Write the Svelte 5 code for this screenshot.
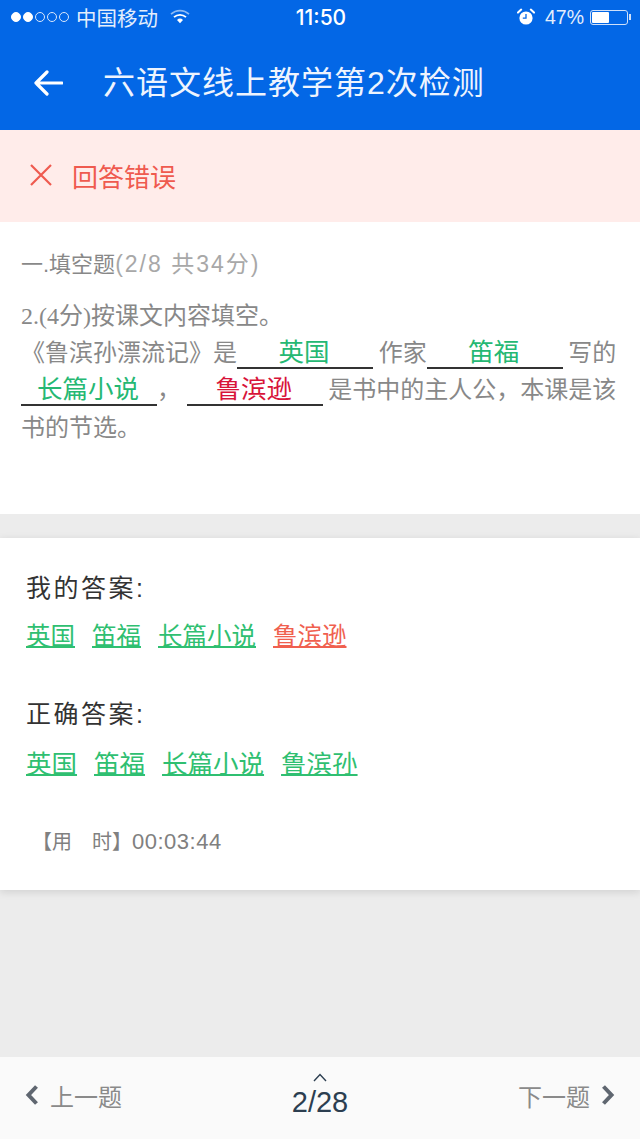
<script>
  const mine = [
    { text: '英国', ok: true },
    { text: '笛福', ok: true },
    { text: '长篇小说', ok: true },
    { text: '鲁滨逊', ok: false },
  ];
  const right = ['英国', '笛福', '长篇小说', '鲁滨孙'];
</script>

<div class="page">
  <header class="top">
    <div class="status">
      <div class="status-left">
        <span class="signal">
          <i class="on"></i><i class="on"></i><i></i><i></i><i></i>
        </span>
        <span class="carrier">中国移动</span>
        <svg class="wifi" width="20" height="16" viewBox="0 0 20 16">
          <path d="M1 5.2a13 13 0 0 1 18 0" fill="none" stroke="#fff" stroke-opacity=".55" stroke-width="1.6" />
          <path d="M4 8.2a8.8 8.8 0 0 1 12 0" fill="none" stroke="#fff" stroke-width="1.8" />
          <path d="M7 11a4.4 4.4 0 0 1 6 0l-3 3.2z" fill="#fff" />
        </svg>
      </div>
      <div class="time">11:50</div>
      <div class="status-right">
        <svg class="alarm" width="18" height="18" viewBox="0 0 18 18">
          <circle cx="9" cy="10" r="6.6" fill="#fff" />
          <path d="M9 6v4.2H5.8" fill="none" stroke="#0367e6" stroke-width="1.3" />
          <path d="M1 4.6 4.2 1.6M17 4.6l-3.2-3" stroke="#fff" stroke-width="2" stroke-linecap="round" />
        </svg>
        <span class="pct">47%</span>
        <span class="battery"><span class="battery-fill" style="width: 50%"></span></span>
        <span class="battery-tip"></span>
      </div>
    </div>
    <div class="nav">
      <svg class="back" width="30" height="28" viewBox="0 0 30 28">
        <path d="M14 3 3 14l11 11M3 14h26" fill="none" stroke="#fff" stroke-width="3.200" stroke-linecap="round" stroke-linejoin="round" />
      </svg>
      <h1>六语文线上教学第2次检测</h1>
    </div>
  </header>

  <div class="banner">
    <svg width="24" height="24" viewBox="0 0 24 24">
      <path d="M2 2l20 20M22 2 2 22" stroke="#ef5a4f" stroke-width="2.2" fill="none" />
    </svg>
    <span>回答错误</span>
  </div>

  <section class="question">
    <div class="section-title">一.填空题<span class="count">(2/8 共34分)</span></div>
    <div class="body">
      <div class="stem"><span class="serif">2.(4</span>分<span class="serif">)</span>按课文内容填空。</div>
      <div>
        《鲁滨孙漂流记》是<span class="blank">英国</span> 作家<span class="blank">笛福</span> 写的 <span class="blank">长篇小说</span>， <span class="blank wrong">鲁滨逊</span> 是书中的主人公，本课是该书的节选。
      </div>
    </div>
  </section>

  <section class="answers">
    <div class="label">我的答案:</div>
    <div class="row mine">
      {#each mine as item}
        <span class:bad={!item.ok}>{item.text}</span>
      {/each}
    </div>
    <div class="label second">正确答案:</div>
    <div class="row right">
      {#each right as item}
        <span>{item}</span>
      {/each}
    </div>
    <div class="used">【用&emsp;时】<span class="clock">00:03:44</span></div>
  </section>

  <div class="spacer"></div>

  <footer class="bottom">
    <div class="pager">
      <svg width="14" height="22" viewBox="0 0 14 22">
        <path d="M11.5 2.5 3.5 11l8 8.500" fill="none" stroke="#5f6670" stroke-width="4" />
      </svg>
      <span>上一题</span>
    </div>
    <div class="progress">
      <svg width="14" height="9" viewBox="0 0 14 9">
        <path d="M1 8l6-6.500L13 8" fill="none" stroke="#2c3e50" stroke-width="1.400" />
      </svg>
      <span>2/28</span>
    </div>
    <div class="pager">
      <span>下一题</span>
      <svg width="14" height="22" viewBox="0 0 14 22">
        <path d="M2.500 2.500l8 8.500-8 8.500" fill="none" stroke="#5f6670" stroke-width="4" />
      </svg>
    </div>
  </footer>
</div>

<style>
  :global(body) {
    margin: 0;
    background: #ececec;
  }

  .page {
    min-height: 1139px;
    display: flex;
    flex-direction: column;
    font-family: 'Liberation Sans', 'Noto Sans CJK SC', sans-serif;
    color: #888;
  }

  .top {
    height: 130px;
    background: #0367e6;
    color: #fff;
    flex: none;
  }

  .status {
    height: 40px;
    padding: 0 9px 6px 11px;
    box-sizing: border-box;
    display: grid;
    grid-template-columns: 1fr auto 1fr;
    align-items: center;
  }

  .status-left,
  .status-right {
    display: flex;
    align-items: center;
  }

  .status-right {
    justify-content: flex-end;
  }

  .signal {
    display: flex;
    gap: 2px;
    margin-right: 7px;
  }

  .signal i {
    width: 10px;
    height: 10px;
    box-sizing: border-box;
    border: 1px solid #dbe8fb;
    border-radius: 50%;
  }

  .signal i.on {
    background: #fff;
    border-color: #fff;
  }

  .carrier {
    font-size: 20.5px;
    color: #e4eefc;
  }

  .wifi {
    margin-left: 12px;
  }

  .time {
    font-family: Inter, 'Liberation Sans', sans-serif;
    font-size: 21px;
    font-weight: 500;
  }

  .alarm {
    margin-right: 10px;
  }

  .pct {
    font-size: 19.500px;
    color: #e4eefc;
    margin-right: 6px;
  }

  .battery {
    width: 38px;
    height: 15px;
    box-sizing: border-box;
    border: 1px solid #cfe0fa;
    border-radius: 3px;
    padding: 1px;
    display: flex;
  }

  .battery-fill {
    background: #fff;
    border-radius: 1px;
  }

  .battery-tip {
    width: 2px;
    height: 6px;
    background: #cfe0fa;
    margin-left: 1px;
  }

  .nav {
    height: 90px;
    display: flex;
    align-items: center;
    padding: 0 0 10px 33px;
    box-sizing: border-box;
    gap: 40px;
  }

  .nav .back {
    margin-top: 6px;
  }

  h1 {
    margin: 0;
    font-size: 32px;
    font-weight: 400;
    letter-spacing: 1px;
    color: #eef4fe;
  }

  .banner {
    height: 92px;
    background: #ffecea;
    display: flex;
    align-items: center;
    padding: 0 0 2px 29px;
    box-sizing: border-box;
    gap: 19px;
    flex: none;
    color: #ef5a4f;
    font-size: 26px;
  }

  .question {
    height: 292px;
    box-sizing: border-box;
    background: #fff;
    padding: 26px 20px 0 21px;
    flex: none;
  }

  .section-title {
    font-size: 22px;
    line-height: 32px;
    margin-bottom: 16px;
  }

  .count {
    font-size: 23px;
    letter-spacing: 2px;
    color: #a8a8a8;
  }

  .body {
    font-size: 24px;
    line-height: 37.500px;
    word-spacing: -1px;
    color: #888;
  }

  .stem {
    margin-bottom: -2px;
  }

  .serif {
    font-family: 'Liberation Serif', 'Noto Sans CJK SC', serif;
  }

  .blank {
    display: inline-block;
    width: 136px;
    height: 32px;
    line-height: 30px;
    text-align: center;
    border-bottom: 2px solid #333;
    color: #25b873;
    font-size: 25.500px;
    box-sizing: border-box;
    text-indent: -2px;
  }

  .blank.wrong {
    color: #d8143a;
  }

  .answers {
    margin-top: 24px;
    height: 352px;
    box-sizing: border-box;
    background: #fff;
    box-shadow: 0 2px 8px rgba(0, 0, 0, 0.12);
    padding: 33px 26px 0;
    flex: none;
  }

  .label {
    font-size: 25px;
    line-height: 34px;
    letter-spacing: 2.500px;
    color: #333;
  }

  .second {
    margin-top: 44px;
  }

  .row {
    display: flex;
    gap: 17px;
    margin-top: 16px;
    color: #2fbf71;
    line-height: 32px;
  }

  .row span {
    text-decoration: underline;
    text-underline-offset: 1px;
  }

  .mine {
    font-size: 24.500px;
  }

  .right {
    font-size: 25.500px;
    padding-top: 1px;
  }

  .row .bad {
    color: #f0604f;
  }

  .used {
    margin-top: 47px;
    padding-left: 6px;
    font-size: 20px;
    line-height: 30px;
    color: #808080;
  }

  .clock {
    font-size: 22px;
    letter-spacing: 0.500px;
  }

  .spacer {
    flex: 1;
  }

  .bottom {
    height: 82px;
    background: #fafafa;
    flex: none;
    display: flex;
    justify-content: space-between;
    align-items: center;
    padding: 0 25px;
    box-sizing: border-box;
  }

  .pager {
    display: flex;
    align-items: center;
    gap: 11px;
    font-size: 24px;
    color: #8a8a8a;
    padding-bottom: 6px;
  }

  .progress {
    display: flex;
    flex-direction: column;
    align-items: center;
    gap: 4px;
    font-size: 29px;
    line-height: 32px;
    color: #2c3e50;
    padding-bottom: 6px;
  }
</style>
